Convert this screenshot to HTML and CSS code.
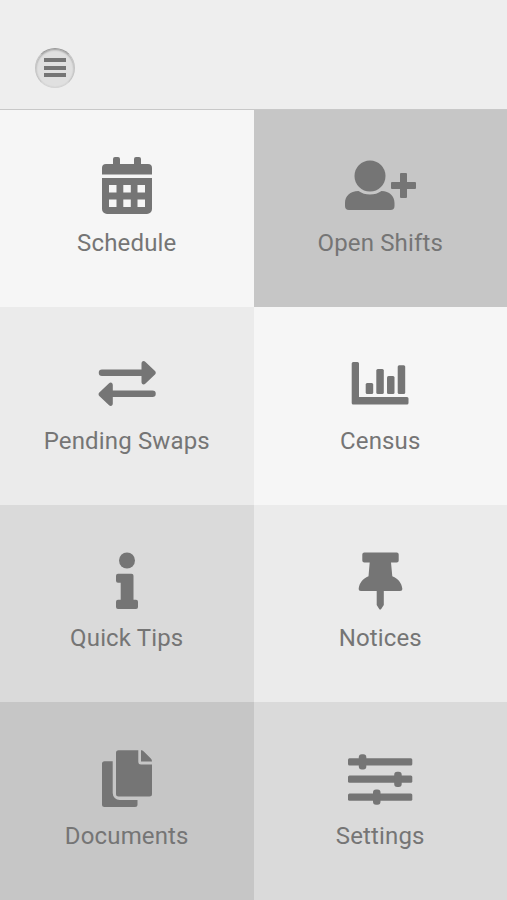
FILE: index.html
```html
<!DOCTYPE html>
<html lang="en">
<head>
    <meta charset="UTF-8">
    <meta name="viewport" content="width=device-width, initial-scale=1.0">
    <title>Menu</title>
    <link rel="stylesheet" href="styles.css">
</head>
<body>

<div class="header">
    <button class="menu-btn" aria-label="Menu">
        <span></span>
        <span></span>
        <span></span>
    </button>
</div>

<div class="tiles">
    <a class="tile lightest" href="#">
        <svg class="icon" viewBox="0 0 80 60">
            <path d="M15 18.5V12a4 4 0 0 1 4-4h7V3a2 2 0 0 1 2-2h3a2 2 0 0 1 2 2v5h14V3a2 2 0 0 1 2-2h3a2 2 0 0 1 2 2v5h7a4 4 0 0 1 4 4v6.5z"/>
            <path fill-rule="evenodd" d="M15 22h50v31a5 5 0 0 1-5 5H20a5 5 0 0 1-5-5zM22 29v7.5h7.5V29zM36.3 29v7.5h7.5V29zM50.5 29v7.5h7.5V29zM22 43.5v7.5h7.5v-7.5zM36.3 43.5v7.5h7.5v-7.5zM50.5 43.5v7.5h7.5v-7.5z"/>
        </svg>
        <span class="label">Schedule</span>
    </a>
    <a class="tile dark" href="#">
        <svg class="icon" viewBox="0 0 80 60">
            <circle cx="30" cy="20" r="15.5"/>
            <path d="M18.5 35C22 37.5 25.5 38.5 30 38.5S38 37.5 41.5 35C49.5 35 54.5 40 54.5 47v3a4 4 0 0 1-4 4H9a4 4 0 0 1-4-4v-3C5 40 10 35 18.5 35z"/>
            <path d="M61 17h5a1 1 0 0 1 1 1v8h8a1 1 0 0 1 1 1v5a1 1 0 0 1-1 1h-8v8a1 1 0 0 1-1 1h-5a1 1 0 0 1-1-1v-8h-8a1 1 0 0 1-1-1v-5a1 1 0 0 1 1-1h8v-8a1 1 0 0 1 1-1z"/>
        </svg>
        <span class="label">Open Shifts</span>
    </a>
    <a class="tile light" href="#">
        <svg class="icon" viewBox="0 0 80 60">
            <path d="M15 15.5h39.5V9.5c0-2.5 2.3-3.3 4-1.5l9.5 9c1 1 1 2.5 0 3.5l-9.5 9c-1.7 1.8-4 1-4-1.5v-6H15a3.25 3.25 0 0 1 0-6.5z"/>
            <path d="M65.5 36.5H25.8V31c0-2.5-2.3-3.3-4-1.5l-9.5 9c-1 1-1 2.5 0 3.5l9.5 9c1.7 1.8 4 1 4-1.5V43h39.7a3.25 3.25 0 0 0 0-6.5z"/>
        </svg>
        <span class="label">Pending Swaps</span>
    </a>
    <a class="tile lightest" href="#">
        <svg class="icon" viewBox="0 0 80 60">
            <path d="M13.2 8h4.3a1.5 1.5 0 0 1 1.5 1.5V43h48a1.5 1.5 0 0 1 1.5 1.5V49a1.5 1.5 0 0 1-1.5 1.5H13.2a1.5 1.5 0 0 1-1.5-1.5V9.5A1.5 1.5 0 0 1 13.2 8z"/>
            <rect x="25.7" y="29" width="7.5" height="11" rx="1.5"/>
            <rect x="36.3" y="15" width="7.5" height="25" rx="1.5"/>
            <rect x="47" y="22" width="7.5" height="18" rx="1.5"/>
            <rect x="57.7" y="11.3" width="7.5" height="28.7" rx="1.5"/>
        </svg>
        <span class="label">Census</span>
    </a>
    <a class="tile medium" href="#">
        <svg class="icon" viewBox="0 0 80 60">
            <circle cx="40" cy="9.5" r="8"/>
            <path d="M31 22.7h13.5a2 2 0 0 1 2 2v24H49a2 2 0 0 1 2 2V56a2 2 0 0 1-2 2H31a2 2 0 0 1-2-2v-5.3a2 2 0 0 1 2-2h2.7v-17H31a2 2 0 0 1-2-2v-5a2 2 0 0 1 2-2z"/>
        </svg>
        <span class="label">Quick Tips</span>
    </a>
    <a class="tile light" href="#">
        <svg class="icon" viewBox="0 0 80 60">
            <path d="M24.3 1.5h32.4a2 2 0 0 1 2 2v6a2 2 0 0 1-2 2h-5.7l1.3 13.8C58.5 28 61.5 32 62.3 37.5c.2 1.7-.8 2.5-2.3 2.5H43.8v14l-2.6 4c-.5.7-1.5.7-2 0l-2.5-4V40H21c-1.5 0-2.5-.8-2.3-2.5.8-5.5 3.8-9.5 9.8-12.2l1.2-13.8h-5.4a2 2 0 0 1-2-2v-6a2 2 0 0 1 2-2z"/>
        </svg>
        <span class="label">Notices</span>
    </a>
    <a class="tile dark" href="#">
        <svg class="icon" viewBox="0 0 80 60">
            <path d="M31.5 1.3h19.8v11.5a2.7 2.7 0 0 0 2.7 2.7h11V45a2.5 2.5 0 0 1-2.5 2.5h-31A2.5 2.5 0 0 1 29 45V3.8a2.5 2.5 0 0 1 2.5-2.5z"/>
            <path d="M54 1.3c1 0 2 .5 2.8 1.3l7 7c.8.8 1.2 1.7 1.2 2.9H54z"/>
            <path d="M17.5 12.2h8.2V44a7 7 0 0 0 7 7h17.8v4.500A2.500 2.500 0 0 1 48 58H17.5a2.5 2.5 0 0 1-2.5-2.5V14.7a2.5 2.5 0 0 1 2.5-2.5z"/>
        </svg>
        <span class="label">Documents</span>
    </a>
    <a class="tile medium" href="#">
        <svg class="icon" viewBox="0 0 80 60">
            <rect x="8" y="9.2" width="64.3" height="7.3" rx="1.5"/>
            <rect x="8" y="26.5" width="64.3" height="7.3" rx="1.5"/>
            <rect x="8" y="44.5" width="64.3" height="7.3" rx="1.5"/>
            <rect x="18.8" y="5.2" width="7.5" height="15.3" rx="3"/>
            <rect x="54.2" y="22.7" width="7.5" height="15.3" rx="3"/>
            <rect x="33" y="40.5" width="7.5" height="15.3" rx="3"/>
        </svg>
        <span class="label">Settings</span>
    </a>
</div>

</body>
</html>
```
FILE: styles.css
```css
body {
    font-family: Roboto, sans-serif;
    margin: 0;
    height: 900px;
    display: flex;
    flex-direction: column;
    background-color: #eeeeee;
    color: #757575;
}
.header {
    box-sizing: border-box;
    height: 110px;
    padding: 48px 0 0 35px;
    background-color: #eeeeee;
    border-bottom: 1px solid #c8c8c8;
}
.menu-btn {
    display: flex;
    flex-direction: column;
    align-items: center;
    justify-content: center;
    gap: 3.5px;
    width: 40px;
    height: 40px;
    padding: 0 0 1px;
    border: 1px solid #c4c4c4;
    border-top-color: #999;
    border-bottom-color: #d4d4d4;
    border-radius: 50%;
    background-color: #e0e0e0;
    box-shadow: inset 0 1px 2px rgba(0, 0, 0, 0.3);
    cursor: pointer;
}
.menu-btn span {
    width: 22px;
    height: 4px;
    background-color: #757575;
}
.tiles {
    flex: 1;
    display: grid;
    grid-template-columns: 1fr 1fr;
    grid-template-rows: 197.4px repeat(3, 1fr);
}
.tile {
    box-sizing: border-box;
    display: flex;
    flex-direction: column;
    align-items: center;
    padding-top: 46.3px;
    color: #757575;
    text-decoration: none;
}
.lightest {
    background-color: #f6f6f6;
}
.light {
    background-color: #ebebeb;
}
.medium {
    background-color: #dadada;
}
.dark {
    background-color: #c6c6c6;
}
.icon {
    width: 80px;
    height: 60px;
    fill: #757575;
}
.label {
    margin-top: 12px;
    font-size: 24px;
    line-height: 30px;
    letter-spacing: 0.15px;
}
```
